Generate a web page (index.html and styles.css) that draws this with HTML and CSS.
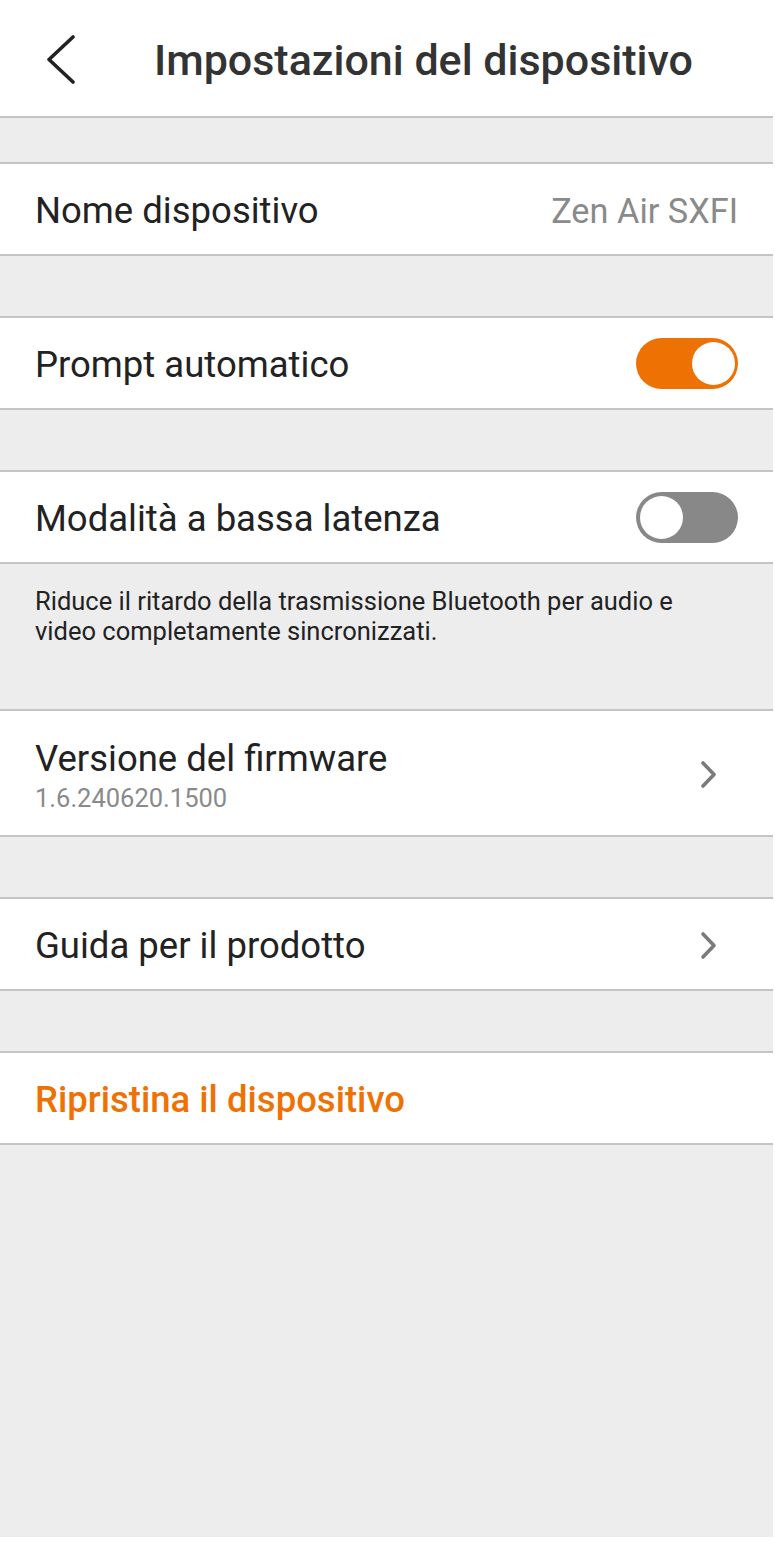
FILE: index.html
```html
<!DOCTYPE html>
<html lang="it">

<head>
    <meta charset="UTF-8">
    <meta name="viewport" content="width=device-width, initial-scale=1.0">
    <title>Impostazioni del dispositivo</title>
    <link rel="stylesheet" href="styles.css">
</head>

<body>

<div class="screen">

    <!-- Top bar -->
    <div class="top-bar">
        <button class="back-btn" aria-label="Indietro">
            <svg width="30" height="50" viewBox="0 0 30 50">
                <polyline points="27,2 3,24.5 27,47" fill="none" stroke="#222222" stroke-width="3.6" stroke-linecap="round" stroke-linejoin="round"/>
            </svg>
        </button>
        <h1 class="title">Impostazioni del dispositivo</h1>
    </div>

    <div class="gap first"></div>

    <!-- Device name -->
    <div class="group">
        <div class="row">
            <span class="label">Nome dispositivo</span>
            <span class="value">Zen Air SXFI</span>
        </div>
    </div>

    <div class="gap"></div>

    <div class="group">
        <div class="row">
            <span class="label">Prompt automatico</span>
            <span class="switch on"><span class="knob"></span></span>
        </div>
    </div>

    <div class="gap"></div>

    <div class="group">
        <div class="row">
            <span class="label">Modalità a bassa latenza</span>
            <span class="switch"><span class="knob"></span></span>
        </div>
    </div>

    <p class="hint">Riduce il ritardo della trasmissione Bluetooth per audio e video completamente sincronizzati.</p>

    <!-- Firmware -->
    <div class="group">
        <div class="row tall">
            <div class="stack">
                <span class="label">Versione del firmware</span>
                <span class="sub">1.6.240620.1500</span>
            </div>
            <svg class="chevron" width="22" height="30" viewBox="0 0 22 30">
                <polyline points="4,3 15,14.5 4,26" fill="none" stroke="#7a7a7a" stroke-width="3.6" stroke-linecap="round" stroke-linejoin="round"/>
            </svg>
        </div>
    </div>

    <div class="gap"></div>

    <div class="group">
        <div class="row">
            <span class="label">Guida per il prodotto</span>
            <svg class="chevron" width="22" height="30" viewBox="0 0 22 30">
                <polyline points="4,3 15,14.5 4,26" fill="none" stroke="#7a7a7a" stroke-width="3.6" stroke-linecap="round" stroke-linejoin="round"/>
            </svg>
        </div>
    </div>

    <div class="gap"></div>

    <div class="group">
        <div class="row">
            <span class="label danger">Ripristina il dispositivo</span>
        </div>
    </div>

</div>

</body>
</html>
```

FILE: styles.css
```css
/* General */
body {
    margin: 0;
    background-color: #FFFFFF;
    font-family: Roboto, "Noto Sans", Arial, sans-serif;
    color: #222222;
}

.screen {
    width: 773px;
    height: 1537px;
    background-color: #EDEDED; /* grey page under the cards */
}

/* Top bar */
.top-bar {
    display: flex;
    align-items: center;
    height: 118px;
    padding-top: 3px;
    box-sizing: border-box;
    background-color: #FFFFFF;
    border-bottom: 2px solid #C4C4C4;
}

.back-btn {
    display: flex;
    background: none;
    border: none;
    padding: 0;
    margin-left: 46px;
    cursor: pointer;
}

.title {
    margin: 0 0 0 78px;
    font-size: 43px;
    font-weight: 500;
    color: #333333;
}

/* Spacers between cards */
.gap {
    height: 60px;
}

.gap.first {
    height: 44px;
}

/* Cards */
.group {
    background-color: #FFFFFF;
    border-top: 2px solid #C4C4C4;
    border-bottom: 2px solid #C4C4C4;
}

.row {
    display: flex;
    align-items: center;
    justify-content: space-between;
    height: 90px;
    padding: 3px 35px 0;
    box-sizing: border-box;
}

.row.tall {
    height: 124px;
}

.stack {
    display: flex;
    flex-direction: column;
}

.label {
    font-size: 36.5px;
}

.label.danger {
    color: #EE7203;
    font-weight: 500;
}

.value {
    font-size: 34.3px;
    color: #8A8A8A;
}

.sub {
    font-size: 25.5px;
    color: #8A8A8A;
    margin-top: 3px;
}

.chevron {
    margin-right: 17px;
}

/* Switches */
.switch {
    display: flex;
    align-items: center;
    width: 102px;
    height: 51px;
    margin-top: -3px;
    border-radius: 26px;
    background-color: #888888;
    padding: 0 4px;
    box-sizing: border-box;
}

.switch.on {
    background-color: #EE7203;
    justify-content: flex-end;
    padding-right: 3px;
}

.knob {
    width: 43px;
    height: 43px;
    border-radius: 50%;
    background-color: #FFFFFF;
}

/* Hint under low latency */
.hint {
    margin: 0;
    height: 145px;
    box-sizing: border-box;
    padding: 22px 35px 0;
    font-size: 25.5px;
    line-height: 30px;
    color: #222222;
}
```
